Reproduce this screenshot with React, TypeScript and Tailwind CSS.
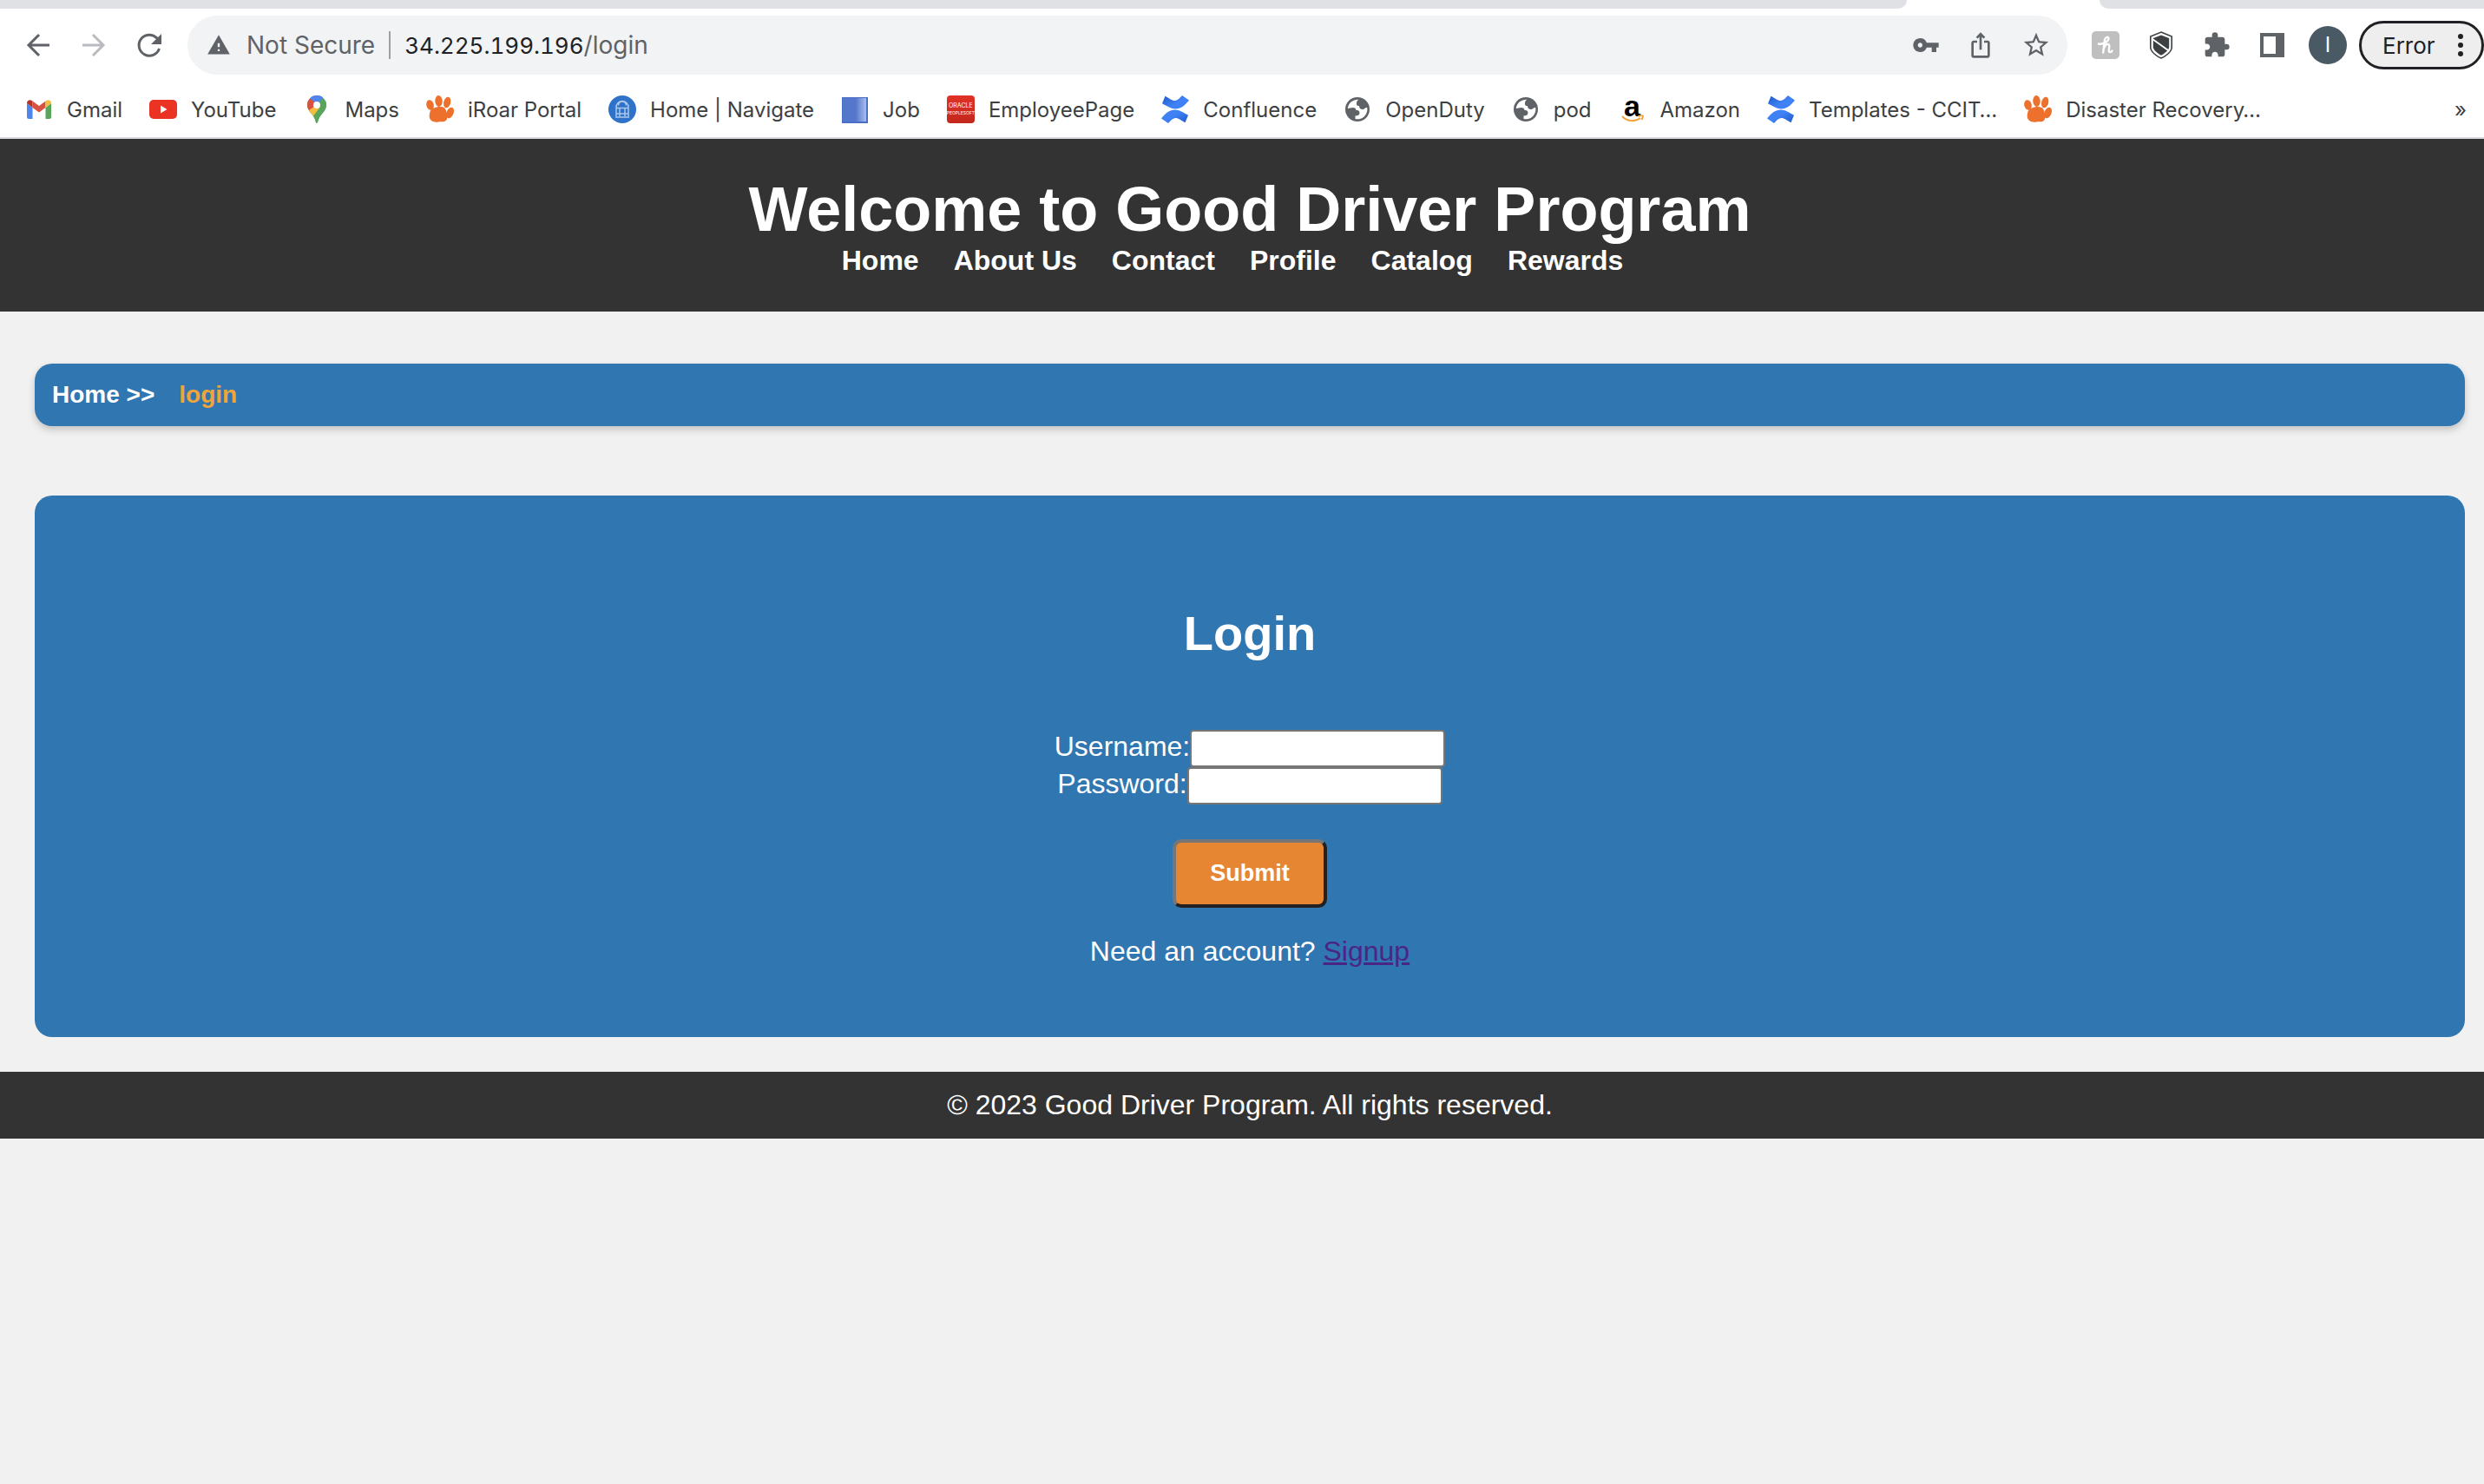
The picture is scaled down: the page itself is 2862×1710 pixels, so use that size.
import type { ReactNode } from "react";
import { MdExtension, MdIosShare, MdStarBorder, MdVpnKey, MdWarning } from "react-icons/md";

const BackIcon = () => (
  <svg viewBox="0 0 32 32" className="size-8" fill="none" stroke="#5f6368" strokeWidth="3">
    <path d="M29 16H6M17 4 5 16l12 12" />
  </svg>
);

const ForwardIcon = () => (
  <svg viewBox="0 0 32 32" className="size-8" fill="none" stroke="#b9bbbe" strokeWidth="3">
    <path d="M3 16h23M15 4l12 12-12 12" />
  </svg>
);

const ReloadIcon = () => (
  <svg viewBox="0 0 32 32" className="size-8" fill="none">
    <path d="M27.5 20A12 12 0 1 1 24.5 7.6L27 10.2" stroke="#5f6368" strokeWidth="3" />
    <path d="M30 3v12H18z" fill="#5f6368" />
  </svg>
);

const GmailIcon = () => (
  <svg viewBox="0 0 32 32" className="size-8">
    <path d="M2 27V9l6.500 5v13H4a2 2 0 0 1-2-2z" fill="#4f86ec" />
    <path d="M30 9v16a2 2 0 0 1-2 2h-4.500V14z" fill="#58a55c" />
    <path d="M8.500 6.500 16 12l7.500-5.500V14L16 19.500 8.500 14z" fill="#d95140" />
    <path d="M2 9c0-4 3.500-4.500 5.500-3.200l1 .7V14L2 9z" fill="#b5352a" />
    <path d="M30 9c0-4-3.500-4.500-5.500-3.200l-1 .7V14L30 9z" fill="#f2bd42" />
  </svg>
);

const YouTubeIcon = () => (
  <svg viewBox="0 0 32 32" className="size-8">
    <rect x="0" y="5" width="32" height="22" rx="5" fill="#ea3323" />
    <path d="M13 11.500v9l7.500-4.500z" fill="#fff" />
  </svg>
);

const MapsIcon = () => (
  <svg viewBox="0 0 32 32" className="size-8">
    <clipPath id="pin">
      <path d="M16 0a11 11 0 0 1 11 11c0 8-8 10-10 20q-.3 1-1 1t-1-1C13 21 5 19 5 11A11 11 0 0 1 16 0z" />
    </clipPath>
    <g clipPath="url(#pin)">
      <path d="M0 0h32v32H0z" fill="#58a55c" />
      <path d="M16 11 25 0H6l2 4z" fill="#4f86ec" />
      <path d="M16 11 27-2H14L7 4z" fill="#5383ec" />
      <path d="M8 3.500 17 10 5 24 0 10z" fill="#d95140" />
      <path d="m16 11 5 3-12 15-5-10z" fill="#f2bd42" />
      <path d="m27 4 1 14-14 16-3-9z" fill="#58a55c" />
    </g>
    <circle cx="16" cy="11" r="4" fill="#fff" />
  </svg>
);

const PawIcon = () => (
  <svg viewBox="0 0 32 32" className="size-8" fill="#ed702d">
    <ellipse cx="4.500" cy="11" rx="4.200" ry="5.800" transform="rotate(-14 4.500 11)" />
    <ellipse cx="14.500" cy="6.500" rx="4.200" ry="6.400" transform="rotate(-4 14.500 6.500)" />
    <ellipse cx="24.200" cy="8" rx="4" ry="6.400" transform="rotate(14 24.200 8)" />
    <ellipse cx="27.500" cy="20" rx="4" ry="6.600" transform="rotate(24 27.500 20)" />
    <path d="M12 13.500c5-1 9.500-.5 10.800 3.500.8 2.500 1 4 1.500 7 .6 4.500-2.800 6.800-6.500 6.300-2.600-.4-4.300.6-7.500.3-4.500-.5-7.300-4-6.500-8.300.5-2 .2-2.500 1-4.300 1.200-2.500 3.700-3.800 7.200-4.500z" />
  </svg>
);

const NavigateIcon = () => (
  <svg viewBox="0 0 32 32" className="size-8" fill="none">
    <circle cx="16" cy="16" r="16" fill="#2f72c9" />
    <g stroke="#a9c8ec" strokeWidth="1.500">
      <path d="M9 24V13.500a7 7 0 0 1 14 0V24M11.500 11.500a4.500 4.500 0 0 1 9 0M8 25h16M9 14.500h14M13 15v9M19 15v9M9 21h14" />
    </g>
  </svg>
);

const JobIcon = () => (
  <svg viewBox="0 0 32 32" className="size-8">
    <defs>
      <linearGradient id="jobShade" x1="0" x2="1" y1="0" y2="0">
        <stop offset=".55" stopColor="#5577cb" />
        <stop offset="1" stopColor="#a9bcec" />
      </linearGradient>
    </defs>
    <rect x="1" y="2" width="30" height="30" fill="#4a6fc6" />
    <rect x="2" y="3" width="27" height="27" fill="url(#jobShade)" />
  </svg>
);

const OracleIcon = () => (
  <span className="flex size-8 flex-col items-center justify-center rounded-sm bg-linear-to-b from-[#e23224] to-[#c2271c] text-[7px] leading-2 text-white">
    <span>ORACLE</span>
    <span className="text-[5px]">PEOPLESOFT</span>
  </span>
);

const ConfluenceIcon = () => (
  <svg viewBox="0 0 32 32" className="size-8">
    <defs>
      <linearGradient id="confTop" x1="0" x2="1" y1="0" y2=".8">
        <stop offset="0" stopColor="#1f57cb" />
        <stop offset=".6" stopColor="#3f82f5" />
      </linearGradient>
      <linearGradient id="confBottom" x1="1" x2="0" y1="1" y2=".2">
        <stop offset="0" stopColor="#1f57cb" />
        <stop offset=".6" stopColor="#3f82f5" />
      </linearGradient>
    </defs>
    <path d="M4.500.8c5.500 3 8.500 5.800 11.500 5.200 3-.6 5.500-3 8-6L32 5.500C27 12 22 15.500 16.500 15.500c-5.500 0-9.500-3-15.500-6.200z" fill="url(#confTop)" />
    <path d="M27.500 31.200c-5.500-3-8.500-5.800-11.500-5.200-3 .6-5.500 3-8 6L0 26.500C5 20 10 16.500 15.500 16.500c5.500 0 9.500 3 15.500 6.200z" fill="url(#confBottom)" />
  </svg>
);

const GlobeIcon = () => (
  <svg viewBox="0 0 32 32" className="size-8">
    <circle cx="16" cy="16" r="14" fill="#5f6368" />
    <path
      d="M4.800 15A11.300 11.300 0 0 1 17.500 4.800C15 6 15 8 15 10c0 1.500 1.500 2.200 3 2 0 2.500 1.500 4 4 4s2-2 5.200-2A11.300 11.300 0 0 1 13.500 27v-3.500c3 0 5-1 5-3.500 0-2.500-2-3-4-3 0-2-1.500-3-4-3-2 0-3.500 1-5.700 1z"
      fill="#fff"
    />
  </svg>
);

const AmazonIcon = () => (
  <span className="relative flex size-8 justify-center font-['Liberation_Sans',Arial,sans-serif] text-[34px] leading-6 font-bold text-black">
    a
    <svg viewBox="0 0 32 32" className="absolute inset-0 size-8" fill="none" stroke="#f4a23a" strokeWidth="2">
      <path d="M4 24c6 6.500 15 6.500 21 2M22.500 24q4.500-1.500 5.500-.5 0 2-1.500 4.500" />
    </svg>
  </span>
);

const HoneyIcon = () => (
  <svg viewBox="0 0 32 32" className="size-8">
    <rect width="32" height="32" rx="5" fill="#bfbfbf" />
    <path
      d="M8 14.500C12 15.500 19.500 12 19.500 8.500 19.500 5.500 15.500 6.500 15 10L13.200 24.500M14 19.500C16 14 20.500 13.500 20.300 17.500L19.800 22C19.800 25 22.500 24.500 23.500 22.500"
      fill="none"
      stroke="#fff"
      strokeWidth="2.400"
      strokeLinecap="round"
      strokeLinejoin="round"
    />
  </svg>
);

const ShieldIcon = () => (
  <svg viewBox="0 0 32 32" className="size-8">
    <path d="M16 1 28.200 6v13C27.500 24.500 20 29.500 16 31 12 29.500 4.500 24.500 3.800 19V6z" fill="#fff" stroke="#3c4043" strokeWidth="1.600" />
    <path d="M16 4.500 25.200 8v10.500c-.8 4-6 7.500-9.200 9.300-3.200-1.800-8.400-5.300-9.200-9.300V8z" fill="#3c4043" />
    <path d="m6 9 19.500 14" stroke="#fff" strokeWidth="1.800" />
  </svg>
);

const SidePanelIcon = () => (
  <svg viewBox="0 0 32 32" className="size-8">
    <path d="M2 2h28v28H2zM6 6v20h14V6z" fill="#5f6368" fillRule="evenodd" />
  </svg>
);

const bookmarks: { label: string; icon: ReactNode }[] = [
  { label: "Gmail", icon: <GmailIcon /> },
  { label: "YouTube", icon: <YouTubeIcon /> },
  { label: "Maps", icon: <MapsIcon /> },
  { label: "iRoar Portal", icon: <PawIcon /> },
  { label: "Home | Navigate", icon: <NavigateIcon /> },
  { label: "Job", icon: <JobIcon /> },
  { label: "EmployeePage", icon: <OracleIcon /> },
  { label: "Confluence", icon: <ConfluenceIcon /> },
  { label: "OpenDuty", icon: <GlobeIcon /> },
  { label: "pod", icon: <GlobeIcon /> },
  { label: "Amazon", icon: <AmazonIcon /> },
  { label: "Templates - CCIT…", icon: <ConfluenceIcon /> },
  { label: "Disaster Recovery…", icon: <PawIcon /> },
];

const navLinks = ["Home", "About Us", "Contact", "Profile", "Catalog", "Rewards"];

function BrowserChrome() {
  return (
    <div className="border-b-2 border-[#dadce0] bg-white font-[Inter,sans-serif]">
      <div className="flex h-2.5 justify-between">
        <div className="w-[2197px] rounded-br-[10px] bg-[#dfe1e5]" />
        <div className="w-[443px] rounded-bl-[10px] bg-[#dfe1e5]" />
      </div>

      <div className="flex h-21 items-center">
        <div className="flex gap-8 px-7">
          <button aria-label="Back"><BackIcon /></button>
          <button aria-label="Forward"><ForwardIcon /></button>
          <button aria-label="Reload"><ReloadIcon /></button>
        </div>
        <div className="flex h-17 flex-1 items-center rounded-full bg-[#f1f3f4] pr-[19px] pl-[22px] text-[28px] text-[#5f6368]">
          <MdWarning className="size-7" />
          <span className="ml-[18px]">Not Secure</span>
          <span className="mx-4 h-8 w-0.5 bg-[#9aa0a6]" />
          <span className="flex-1">
            <span className="text-[26px] text-[#202124] tabular-nums">34.225.199.196</span>/login
          </span>
          <div className="flex items-center gap-[31px]">
            <button aria-label="Passwords"><MdVpnKey className="size-8" /></button>
            <button aria-label="Share"><MdIosShare className="size-8" /></button>
            <button aria-label="Bookmark"><MdStarBorder className="size-[34px]" /></button>
          </div>
        </div>
        <div className="flex gap-8 pr-[26px] pl-7 text-[#5f6368]">
          <button aria-label="Honey"><HoneyIcon /></button>
          <button aria-label="Shield"><ShieldIcon /></button>
          <button aria-label="Extensions"><MdExtension className="size-8" /></button>
          <button aria-label="Side panel"><SidePanelIcon /></button>
        </div>
        <button className="size-11 rounded-full bg-[#495a64] text-2xl text-white">I</button>
        <button className="ml-3.5 flex h-14 w-36 items-center justify-between rounded-full border-3 border-[#202124] bg-[#eee] pr-5 pl-6 text-[26px] text-[#202124]">
          Error
          <svg viewBox="0 0 8 32" className="h-8 w-2" fill="#202124">
            <circle cx="4" cy="6" r="3" />
            <circle cx="4" cy="16" r="3" />
            <circle cx="4" cy="26" r="3" />
          </svg>
        </button>
      </div>

      <div className="flex h-16 items-center justify-between pr-5 pl-[29px] text-[24px] text-[#3c4043]">
        <nav aria-label="Bookmarks" className="flex gap-[31px]">
          {bookmarks.map(({ label, icon }) => (
            <a key={label} href="#" className="flex items-center gap-4 whitespace-nowrap">
              {icon}
              {label}
            </a>
          ))}
        </nav>
        <button aria-label="More bookmarks">»</button>
      </div>
    </div>
  );
}

export default function App() {
  return (
    <div className="min-h-screen overflow-x-hidden bg-[#f1f1f1] font-['Liberation_Sans',Arial,sans-serif] text-[32px] leading-[37px] text-white">
      <BrowserChrome />

      <header className="bg-[#333] py-10 pl-4.5 text-center font-bold">
        <h1 className="text-[72px] leading-[82px]">Welcome to Good Driver Program</h1>
        <nav aria-label="Main" className="flex justify-center">
          {navLinks.map((link) => (
            <a key={link} href="#" className="mr-10">{link}</a>
          ))}
        </nav>
      </header>

      <main className="mt-15 mr-[22px] mb-10 ml-10">
        <nav aria-label="Breadcrumb" className="flex gap-7 rounded-[20px] bg-[#3076b1] p-5 text-[28px] leading-8 font-bold shadow-[0_4px_8px_rgba(0,0,0,0.2)]">
          <a href="#">Home &gt;&gt;</a>
          <span className="text-[#f0a43a]">login</span>
        </nav>

        <section className="mt-20 flex flex-col items-center rounded-[20px] bg-[#3076b1] pt-[127px] pb-20">
          <h2 className="text-[56px] leading-16 font-bold">Login</h2>
          <form className="mt-[79px] flex flex-col items-center" onSubmit={(e) => e.preventDefault()}>
            <div className="flex">
              <label htmlFor="username" className="leading-[39px]">Username:</label>
              <input id="username" type="text" className="h-[43px] w-[294px] rounded-sm border-2 border-[#767676] bg-white px-1 text-[26px] text-black" />
            </div>
            <div className="flex">
              <label htmlFor="password" className="leading-[39px]">Password:</label>
              <input id="password" type="password" className="h-[43px] w-[294px] rounded-sm border-2 border-[#767676] bg-white px-1 text-[26px] text-black" />
            </div>
            <button type="submit" className="mt-10 h-[79px] w-[178px] rounded-[10px] border-4 border-t-[#767676] border-r-[#212121] border-b-[#212121] border-l-[#767676] bg-[#e68532] text-[27px] font-bold">
              Submit
            </button>
          </form>
          <p className="mt-8">
            Need an account? <a href="#" className="text-[#4b2585] underline">Signup</a>
          </p>
        </section>
      </main>

      <footer className="bg-[#333] py-5 pl-4.5 text-center">
        <p>© 2023 Good Driver Program. All rights reserved.</p>
      </footer>
    </div>
  );
}
